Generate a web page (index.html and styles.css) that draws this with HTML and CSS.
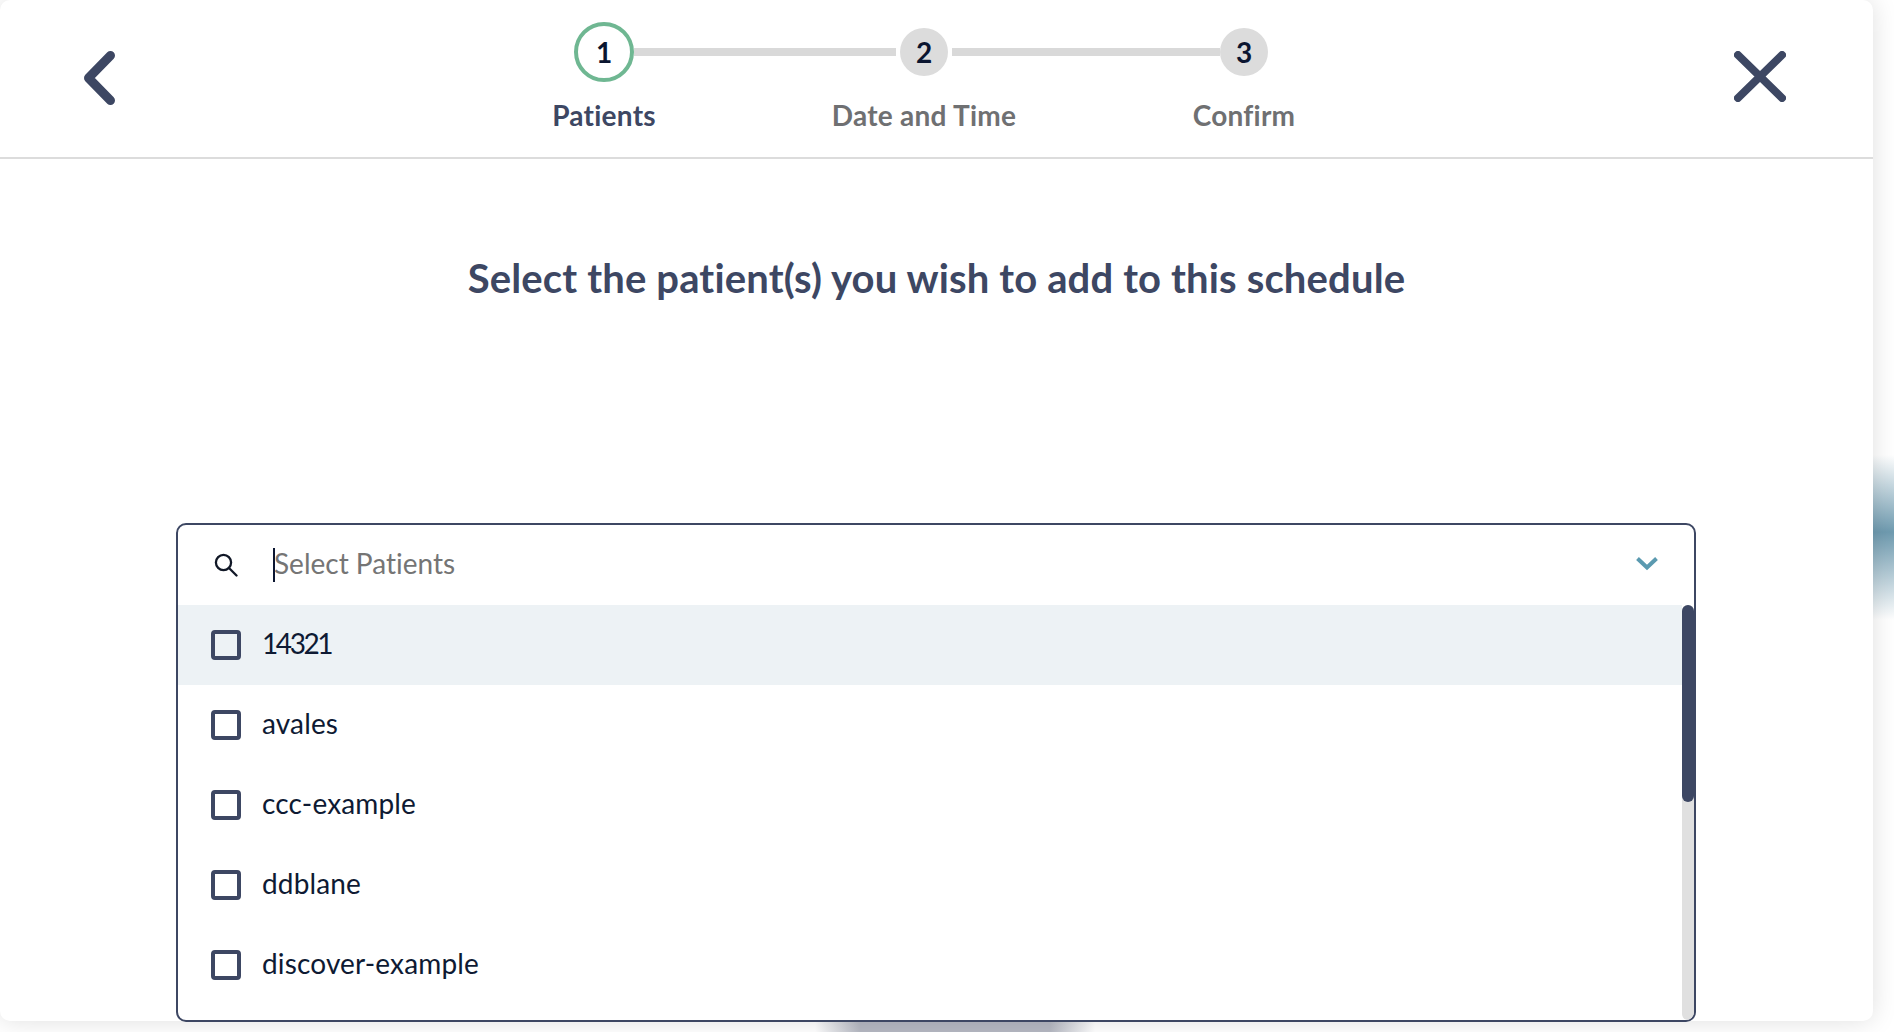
FILE: index.html
```html
<!DOCTYPE html>
<html lang="en">
<head>
<meta charset="utf-8">
<title>Select patients</title>
<link rel="stylesheet" href="styles.css">
</head>
<body>
<div class="card">
  <header class="header">
    <button class="icon-btn back" aria-label="Back">
      <svg width="31" height="54" viewBox="0 0 31 54"><polyline points="26.5,4.5 4.5,27 26.5,49.5" fill="none" stroke="#3d4763" stroke-width="9" stroke-linecap="round" stroke-linejoin="round"/></svg>
    </button>
    <div class="stepper">
      <div class="track">
        <span class="dot dot-active">1</span>
        <span class="line line-a"></span>
        <span class="dot">2</span>
        <span class="line line-b"></span>
        <span class="dot">3</span>
      </div>
      <div class="labels">
        <span class="label label-active">Patients</span>
        <span class="label">Date and Time</span>
        <span class="label">Confirm</span>
      </div>
    </div>
    <button class="icon-btn close" aria-label="Close">
      <svg width="52" height="51" viewBox="0 0 52 51"><path d="M4 4 48 47M48 4 4 47" fill="none" stroke="#3d4763" stroke-width="8" stroke-linecap="round"/></svg>
    </button>
  </header>
  <main class="main">
    <h1 class="title">Select the patient(s) you wish to add to this schedule</h1>
    <div class="select">
      <div class="search">
        <svg class="search-icon" width="24" height="24" viewBox="0 0 24 24"><circle cx="9.5" cy="9.5" r="7.6" fill="none" stroke="#111827" stroke-width="2.3"/><path d="M15 15 22.5 22.5" stroke="#111827" stroke-width="2.3" stroke-linecap="round"/></svg>
        <span class="caret"></span>
        <span class="placeholder">Select Patients</span>
        <svg class="chevron" width="22" height="14" viewBox="0 0 22 14"><polyline points="1.5,1.5 11,10.5 20.5,1.5" fill="none" stroke="#5b9ab0" stroke-width="4"/></svg>
      </div>
      <div class="body">
        <div class="list">
          <div class="row row-hover"><span class="check"></span><span class="name name-num">14321</span></div>
          <div class="row"><span class="check"></span><span class="name">avales</span></div>
          <div class="row"><span class="check"></span><span class="name">ccc-example</span></div>
          <div class="row"><span class="check"></span><span class="name">ddblane</span></div>
          <div class="row"><span class="check"></span><span class="name">discover-example</span></div>
        </div>
        <div class="scrollbar"><div class="thumb"></div></div>
      </div>
    </div>
  </main>
</div>
</body>
</html>
```
FILE: styles.css
```css
* { box-sizing: border-box; }
html, body { margin: 0; height: 1032px; overflow: hidden; }
body {
  font-family: Lato, "Open Sans", sans-serif;
  font-variant-ligatures: none;
  background-color: #fff;
  background-image:
    linear-gradient(to bottom, transparent 455px, #6f9bb0 532px, transparent 620px),
    linear-gradient(to right, transparent 815px, #b5b8c2 860px, #b5b8c2 1050px, transparent 1095px);
  background-repeat: no-repeat;
  background-position: right top, left bottom;
  background-size: 21px 100%, 100% 11px;
}
.card {
  width: 1873px;
  height: 1021px;
  background: #fff;
  border-radius: 10px;
  box-shadow: 0 0 26px rgba(0, 0, 0, .13);
}
.header {
  display: grid;
  grid-template-columns: 444px 960px 1fr;
  height: 159px;
  border-bottom: 2px solid #dcdcdc;
}
.icon-btn {
  padding: 0;
  border: 0;
  background: none;
  height: 54px;
  margin-top: 51px;
  display: flex;
}
.back { justify-self: start; margin-left: 84px; }
.close { justify-self: end; margin-right: 87px; }
.stepper { padding-top: 22px; }
.track {
  display: flex;
  align-items: center;
  margin-left: 130px;
}
.dot {
  flex: none;
  width: 48px;
  height: 48px;
  border-radius: 50%;
  background: #dcdcdc;
  color: #0b1530;
  font-size: 28px;
  font-weight: 700;
  display: flex;
  align-items: center;
  justify-content: center;
}
.dot-active {
  width: 60px;
  height: 60px;
  background: #fff;
  border: 4px solid #6fb792;
}
.line { flex: none; height: 8px; background: #d9d9d9; }
.line-a { width: 262px; margin-right: 4px; }
.line-b { width: 268px; margin-left: 4px; }
.labels {
  display: grid;
  grid-template-columns: repeat(3, 320px);
  margin-top: 16px;
}
.label {
  text-align: center;
  font-size: 28px;
  letter-spacing: .25px;
  line-height: 34px;
  font-weight: 700;
  color: #6f7072;
}
.label-active { color: #3d4763; }
.main { display: flex; flex-direction: column; }
.title {
  margin: 96px 0 0;
  text-align: center;
  font-size: 40px;
  letter-spacing: .15px;
  line-height: 46px;
  font-weight: 700;
  color: #3d4763;
}
.select {
  width: 1520px;
  height: 499px;
  margin: 222px 0 0 176px;
  border: 2px solid #3d4763;
  border-radius: 10px;
  overflow: hidden;
  display: flex;
  flex-direction: column;
}
.search {
  flex: none;
  height: 80px;
  display: flex;
  align-items: center;
  padding: 0 36px 0 36px;
}
.search-icon { flex: none; }
.caret {
  flex: none;
  width: 2px;
  height: 34px;
  margin: 0 -1px 0 35px;
  background: #0b1530;
}
.placeholder {
  flex: 1;
  font-size: 28px;
  padding-bottom: 5px;
  color: #757575;
}
.chevron { flex: none; margin-bottom: 2px; }
.body {
  flex: 1;
  min-height: 0;
  display: flex;
}
.list { flex: 1; min-width: 0; }
.scrollbar {
  flex: none;
  width: 12px;
  background: #e0e0e0;
  border-radius: 6px;
}
.thumb {
  height: 197px;
  background: #3d4763;
  border-radius: 6px;
}
.row {
  height: 80px;
  display: flex;
  align-items: center;
  padding-left: 33px;
  gap: 21px;
}
.row-hover { background: #edf2f5; }
.check {
  flex: none;
  width: 30px;
  height: 30px;
  border: 4px solid #3d4763;
  border-radius: 4px;
  background: #fff;
}
.row-hover .check { background: #edf2f5; }
.name {
  font-size: 28px;
  letter-spacing: .15px;
  padding-bottom: 5px;
  color: #0e1a33;
}
.name-num { letter-spacing: -2.4px; }
```
